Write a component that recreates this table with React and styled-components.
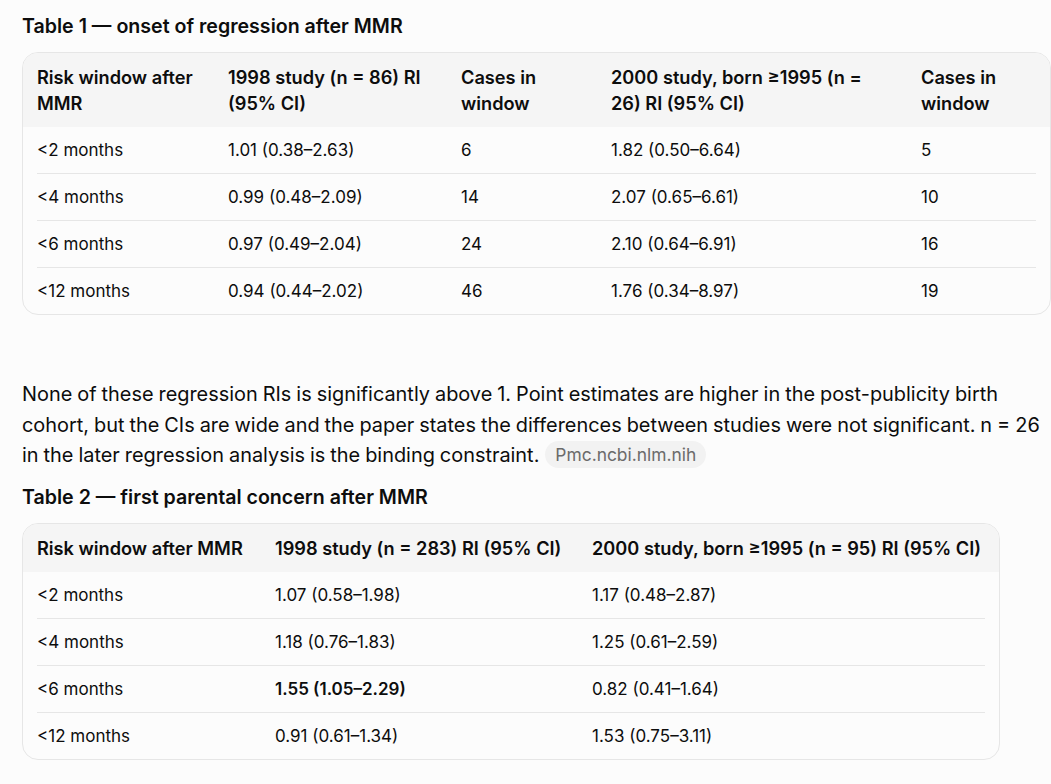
import React from 'react'
import styled, { createGlobalStyle } from 'styled-components'

const GlobalStyle = createGlobalStyle`
  html, body {
    margin: 0;
    padding: 0;
    background: #fcfcfc;
    overflow: hidden;
  }
  body {
    font-family: Inter, "Noto Sans", "Liberation Sans", sans-serif;
    color: #0d0d0d;
    -webkit-font-smoothing: antialiased;
  }
`

const Page = styled.div`
  padding: 12px 0 0 22px;
`

const Title = styled.h3`
  margin: 0 0 12px;
  font-size: 19.6px;
  line-height: 28px;
  font-weight: 600;
`

const Card = styled.div`
  width: ${p => p.$width}px;
  box-sizing: border-box;
  border: 1px solid #e6e6e6;
  border-radius: 16px;
  overflow: hidden;
  background: #fcfcfc;
  margin-bottom: ${p => p.$gap}px;
`

const HeadRow = styled.div`
  display: grid;
  grid-template-columns: ${p => p.$cols};
  padding: 11px 14px;
  background: #f5f5f5;
`

const HeadCell = styled.div`
  font-size: 18.2px;
  line-height: 26px;
  font-weight: 600;
  white-space: pre;
`

const Row = styled.div`
  display: grid;
  grid-template-columns: ${p => p.$cols};
  margin: 0 14px;
  padding: 10px 0;
  & + & {
    border-top: 1px solid #e6e6e6;
  }
`

const Cell = styled.div`
  font-size: 17px;
  line-height: 26px;
  font-weight: ${p => (p.$bold ? 600 : 400)};
  white-space: nowrap;
`

const Paragraph = styled.p`
  margin: 0 0 12px;
  width: 1026px;
  font-size: 19.9px;
  line-height: 30.5px;
  word-spacing: -0.6px;
`

const Source = styled.span`
  display: inline-block;
  margin-left: 6px;
  padding: 0 10px;
  height: 27px;
  line-height: 27px;
  border-radius: 14px;
  background: #f2f2f2;
  color: #6b6b6b;
  font-size: 17.4px;
  word-spacing: 0;
  vertical-align: 1px;
`

const table1 = {
  cols: '191px 233px 150px 310px 1fr',
  head: [
    'Risk window after\nMMR',
    '1998 study (n = 86) RI\n(95% CI)',
    'Cases in\nwindow',
    '2000 study, born ≥1995 (n =\n26) RI (95% CI)',
    'Cases in\nwindow',
  ],
  rows: [
    ['<2 months', '1.01 (0.38–2.63)', '6', '1.82 (0.50–6.64)', '5'],
    ['<4 months', '0.99 (0.48–2.09)', '14', '2.07 (0.65–6.61)', '10'],
    ['<6 months', '0.97 (0.49–2.04)', '24', '2.10 (0.64–6.91)', '16'],
    ['<12 months', '0.94 (0.44–2.02)', '46', '1.76 (0.34–8.97)', '19'],
  ],
}

const table2 = {
  cols: '238px 317px 1fr',
  head: ['Risk window after MMR', '1998 study (n = 283) RI (95% CI)', '2000 study, born ≥1995 (n = 95) RI (95% CI)'],
  rows: [
    ['<2 months', '1.07 (0.58–1.98)', '1.17 (0.48–2.87)'],
    ['<4 months', '1.18 (0.76–1.83)', '1.25 (0.61–2.59)'],
    ['<6 months', { text: '1.55 (1.05–2.29)', bold: true }, '0.82 (0.41–1.64)'],
    ['<12 months', '0.91 (0.61–1.34)', '1.53 (0.75–3.11)'],
  ],
}

function DataTable({ data, width, gap }) {
  return (
    <Card $width={width} $gap={gap}>
      <HeadRow $cols={data.cols}>
        {data.head.map((h, i) => (
          <HeadCell key={i}>{h}</HeadCell>
        ))}
      </HeadRow>
      {data.rows.map((row, r) => (
        <Row key={r} $cols={data.cols}>
          {row.map((c, i) =>
            typeof c === 'string' ? (
              <Cell key={i}>{c}</Cell>
            ) : (
              <Cell key={i} $bold={c.bold}>{c.text}</Cell>
            )
          )}
        </Row>
      ))}
    </Card>
  )
}

export default function App() {
  return (
    <Page>
      <GlobalStyle />
      <Title>Table 1 — onset of regression after MMR</Title>
      <DataTable data={table1} width={1029} gap={64} />
      <Paragraph>
        None of these regression RIs is significantly above 1. Point estimates are higher in the post-publicity birth
        cohort, but the CIs are wide and the paper states the differences between studies were not significant. n = 26
        in the later regression analysis is the binding constraint.
        <Source>Pmc.ncbi.nlm.nih</Source>
      </Paragraph>
      <Title>Table 2 — first parental concern after MMR</Title>
      <DataTable data={table2} width={978} gap={0} />
    </Page>
  )
}
